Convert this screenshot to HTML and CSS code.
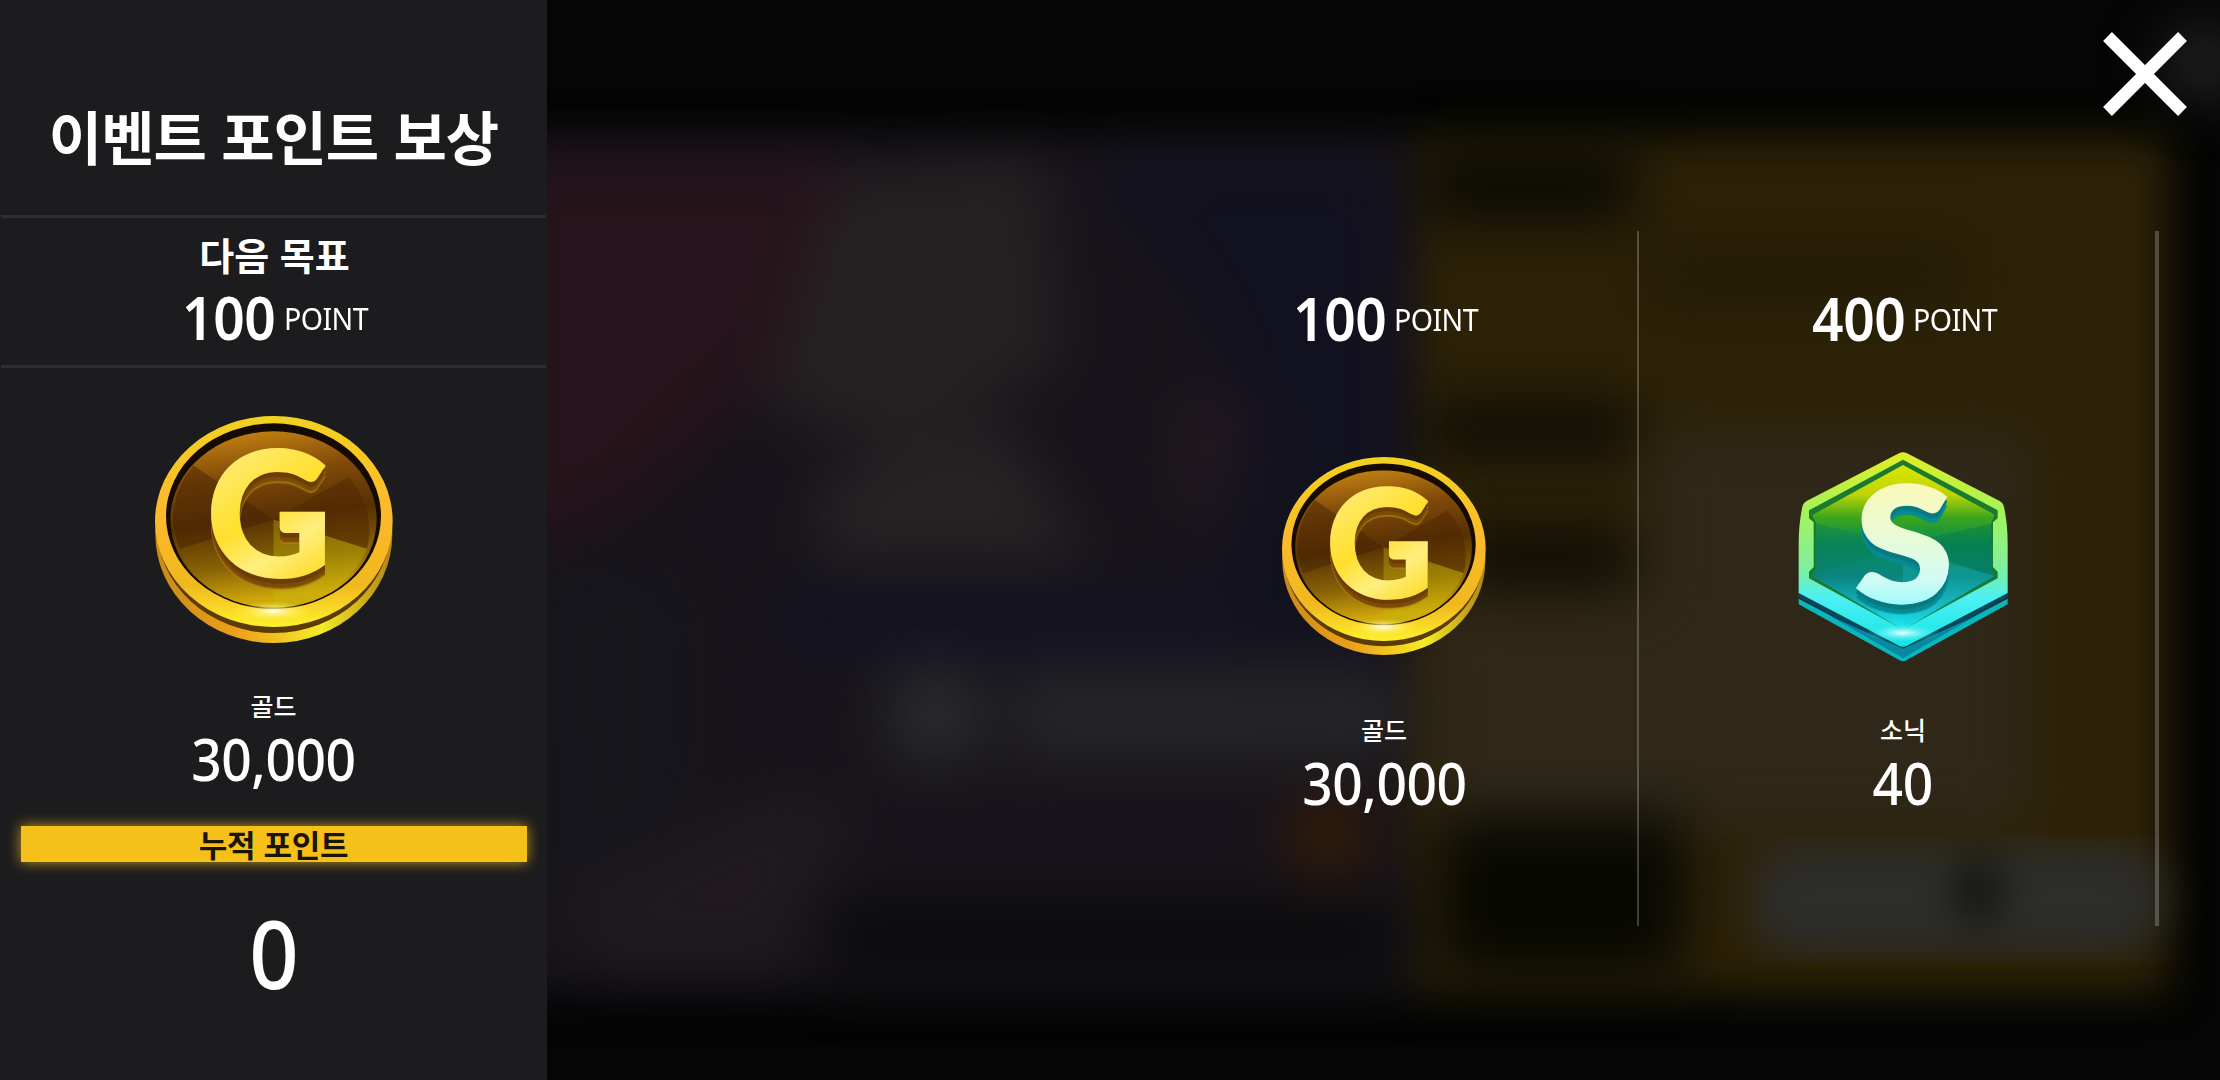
FILE: index.html
```
<!DOCTYPE html>
<html lang="ko">

<head>
    <meta charset="UTF-8">
    <title>이벤트 포인트 보상</title>
    <link rel="stylesheet" href="styles.css">
</head>

<body>

    <!-- blurred lobby behind the popup -->
    <svg class="backdrop" viewBox="0 0 2220 1080" preserveAspectRatio="none" aria-hidden="true">
        <defs>
            <filter id="soft" x="-10%" y="-10%" width="120%" height="120%" color-interpolation-filters="sRGB">
                <feGaussianBlur stdDeviation="28" />
            </filter>
            <filter id="edge" x="-10%" y="-10%" width="120%" height="120%" color-interpolation-filters="sRGB">
                <feGaussianBlur stdDeviation="20" />
            </filter>
        </defs>
        <rect width="2220" height="1080" fill="#040504" />
        <g filter="url(#edge)">
            <rect x="400" y="138" width="1010" height="855" fill="#18141b" />
            <rect x="1412" y="138" width="756" height="855" fill="#2c2207" />
        </g>
        <g filter="url(#soft)">
            <path d="M500 160H850L760 380L640 500L500 560Z" fill="#26131b" />
            <path d="M830 180L1040 160L1060 360L900 450L760 400Z" fill="#252122" />
            <path d="M1090 160H1395V500H1290L1200 300Z" fill="#12111f" />
            <path d="M820 480L1000 420L1090 560H820Z" fill="#272224" />
            <path d="M1170 400L1240 390L1260 520H1180Z" fill="#221820" />
            <rect x="780" y="590" width="600" height="60" fill="#131322" />
            <rect x="1230" y="460" width="160" height="190" fill="#12121e" />
            <rect x="890" y="670" width="90" height="90" fill="#2a2b2d" />
            <rect x="1010" y="670" width="390" height="90" fill="#252528" />
            <path d="M540 580H680V800L560 900Z" fill="#17171d" />
            <path d="M560 900L760 800H860L780 960H600Z" fill="#201a20" />
            <rect x="830" y="900" width="570" height="80" fill="#0b0b0d" />
            <ellipse cx="1328" cy="835" rx="40" ry="40" fill="#351c05" />
            <rect x="1425" y="150" width="210" height="70" fill="#0a0904" />
            <rect x="1640" y="240" width="330" height="70" fill="#251c07" />
            <rect x="1430" y="404" width="205" height="50" fill="#0a0904" />
            <rect x="1460" y="530" width="170" height="54" fill="#0a0904" />
            <path d="M1650 430H2030V830H1430V600H1650Z" fill="#2f2819" />
            <rect x="1440" y="815" width="245" height="160" fill="#080803" />
            <ellipse cx="2205" cy="62" rx="44" ry="36" fill="#242424" />
        </g>
        <g filter="url(#edge)">
            <rect x="1750" y="846" width="415" height="106" rx="50" fill="#2d2d2c" />
            <ellipse cx="1978" cy="892" rx="24" ry="32" fill="#121211" />
        </g>
    </svg>

    <!-- shared icons -->
    <svg class="sprite" aria-hidden="true">
        <defs>
            <linearGradient id="rim" x1="0" y1="0" x2="0" y2="1">
                <stop offset="0" stop-color="#f2d21f" />
                <stop offset=".45" stop-color="#fcb92c" />
                <stop offset=".8" stop-color="#f0b81e" />
                <stop offset="1" stop-color="#fff12e" />
            </linearGradient>
            <linearGradient id="base" x1="0" y1="0" x2="1" y2="0">
                <stop offset="0" stop-color="#c98a17" />
                <stop offset=".35" stop-color="#eda11c" />
                <stop offset=".7" stop-color="#f5ec27" />
                <stop offset="1" stop-color="#b38413" />
            </linearGradient>
            <linearGradient id="face" x1="0" y1="0" x2=".15" y2="1">
                <stop offset="0" stop-color="#d08c12" />
                <stop offset=".3" stop-color="#80490a" />
                <stop offset=".55" stop-color="#573003" />
                <stop offset=".8" stop-color="#8a6306" />
                <stop offset="1" stop-color="#d0a80c" />
            </linearGradient>
            <linearGradient id="gold" x1="0" y1="0" x2=".4" y2="1">
                <stop offset=".1" stop-color="#fff59c" />
                <stop offset=".4" stop-color="#ffe654" />
                <stop offset=".6" stop-color="#ffdf2c" />
                <stop offset=".8" stop-color="#ffee80" />
                <stop offset="1" stop-color="#ffdd2c" />
            </linearGradient>
            <radialGradient id="shine">
                <stop offset="0" stop-color="#fffde0" />
                <stop offset="1" stop-color="#fff12e" stop-opacity="0" />
            </radialGradient>
            <radialGradient id="glint">
                <stop offset="0" stop-color="#f0ffff" />
                <stop offset="1" stop-color="#3df0f4" stop-opacity="0" />
            </radialGradient>
            <linearGradient id="hexRim" x1="0" y1="0" x2="0" y2="1">
                <stop offset="0" stop-color="#e2ee22" />
                <stop offset=".3" stop-color="#a5f35a" />
                <stop offset=".6" stop-color="#7df0a0" />
                <stop offset=".75" stop-color="#4cf0f4" />
                <stop offset="1" stop-color="#12e4e4" />
            </linearGradient>
            <linearGradient id="hexFace" x1="0" y1="0" x2="0" y2="1">
                <stop offset="0" stop-color="#dce600" />
                <stop offset=".18" stop-color="#bdd405" />
                <stop offset=".32" stop-color="#3ba61c" />
                <stop offset=".48" stop-color="#078a55" />
                <stop offset=".68" stop-color="#0a8580" />
                <stop offset=".85" stop-color="#14b4c6" />
                <stop offset="1" stop-color="#1ff0f4" />
            </linearGradient>
            <linearGradient id="mint" x1="0" y1="0" x2="0" y2="1">
                <stop offset=".2" stop-color="#fbf8b8" />
                <stop offset=".5" stop-color="#e6fbd8" />
                <stop offset=".7" stop-color="#d3fbf4" />
                <stop offset=".85" stop-color="#9bfbff" />
            </linearGradient>
        </defs>

        <symbol id="coin" viewBox="75 77 713 680" preserveAspectRatio="none" overflow="visible">
            <ellipse cx="431" cy="432" rx="355" ry="325" fill="url(#base)" />
            <ellipse cx="431" cy="405" rx="351" ry="322" fill="#5b3b06" />
            <ellipse cx="431" cy="393" rx="356" ry="316" fill="url(#rim)" />
            <ellipse cx="430" cy="377" rx="322" ry="278" fill="#150b03" />
            <ellipse cx="430" cy="387" rx="309" ry="264" fill="url(#face)" />
            <path d="M430 387L190 225A309 264 0 0 0 150 475Z" fill="#462402" opacity=".5" />
            <path d="M430 387L655 260A309 264 0 0 1 710 475Z" fill="#502802" opacity=".55" />
            <path d="M430 387L710 475A309 264 0 0 1 430 651Z" fill="#c5b908" opacity=".35" />
            <ellipse cx="430" cy="662" rx="120" ry="30" fill="url(#shine)" />
            <text class="coin-letter" x="417" y="560" fill="url(#gold)" stroke="url(#gold)">G</text>
        </symbol>

        <symbol id="sonic" viewBox="85 65 630 630" preserveAspectRatio="none" overflow="visible">
            <path d="M87 505L400 670L714 505V522L410 690Q400 696 390 690L87 522Z" fill="#0ab6bd" />
            <path d="M87 470L400 640L714 470V500L400 682L87 500Z" fill="#06475a" />
            <path d="M180 556L400 682L620 556L400 655Z" fill="#0889a2" />
            <path d="M388 69Q400 63 412 69L690 212Q701 218 703 230Q714 280 714 340V488L412 646Q400 652 388 646L87 488V340Q87 280 98 230Q100 218 111 212Z" fill="url(#hexRim)" />
            <path d="M400 88L670 232L684 240V264L670 276V410L684 424V444L410 592Q400 598 390 592L118 444V424L132 410V276L118 264V240Z" fill="#1b7a30" />
            <path d="M400 104L662 246L674 254L664 280V412L676 436L400 598L126 436L140 412V280L128 254Z" fill="url(#hexFace)" />
            <path d="M400 340L140 280V412L126 436Z" fill="#087a5c" opacity=".35" />
            <path d="M400 340L664 280V412L676 440Z" fill="#04704c" opacity=".35" />
            <path d="M400 360L676 436L400 590Z" fill="#20c8d0" opacity=".25" />
            <ellipse cx="400" cy="608" rx="110" ry="26" fill="url(#glint)" />
            <text class="sonic-letter" transform="translate(403 514) scale(1.12 1)" fill="url(#mint)" stroke="url(#mint)">S</text>
        </symbol>
    </svg>

    <aside class="sidebar">
        <h1 class="title">이벤트 포인트 보상</h1>
        <div class="goal">
            <div class="goal-label">다음 목표</div>
            <div class="points"><span class="num">100</span><span class="unit">POINT</span></div>
        </div>
        <svg class="goal-icon"><use href="#coin" /></svg>
        <div class="item-name">골드</div>
        <div class="item-count">30,000</div>
        <div class="total-label">누적 포인트</div>
        <div class="total">0</div>
    </aside>

    <main class="rewards">
        <section class="reward">
            <div class="points"><span class="num">100</span><span class="unit">POINT</span></div>
            <div class="reward-icon"><svg class="coin"><use href="#coin" /></svg></div>
            <div class="item-name">골드</div>
            <div class="item-count">30,000</div>
        </section>
        <section class="reward last">
            <div class="points"><span class="num">400</span><span class="unit">POINT</span></div>
            <div class="reward-icon"><svg class="sonic"><use href="#sonic" /></svg></div>
            <div class="item-name">소닉</div>
            <div class="item-count">40</div>
        </section>
    </main>

    <button class="close" aria-label="닫기">
        <svg viewBox="0 0 84 84"><path d="M4.5 4.5L79.5 79.5M79.5 4.5L4.5 79.5" /></svg>
    </button>

</body>

</html>
```
FILE: styles.css
```
* {
    box-sizing: border-box;
}

body {
    margin: 0;
    display: flex;
    height: 1080px;
    overflow: hidden;
    position: relative;
    background: #040504;
    color: #fff;
    font-family: "Noto Sans CJK KR", sans-serif;
    font-weight: 500;
}

.backdrop {
    position: absolute;
    top: 0;
    left: 0;
    width: 100%;
    height: 100%;
}

.sprite {
    position: absolute;
    width: 0;
    height: 0;
}

.sidebar {
    position: relative;
    width: 547px;
    height: 100%;
    display: flex;
    flex-direction: column;
    align-items: center;
    background: #1c1c1e;
}

.title {
    margin: 0;
    width: 545px;
    height: 218px;
    padding-top: 56px;
    border-bottom: 3px solid #2e2e30;
    font-size: 58px;
    font-weight: 700;
    letter-spacing: -1px;
    line-height: 158px;
    text-align: center;
    white-space: nowrap;
}

.goal {
    width: 545px;
    height: 150px;
    padding-top: 6px;
    border-bottom: 3px solid #2e2e30;
    text-align: center;
}

.goal-label {
    font-size: 38px;
    font-weight: 700;
    line-height: 60px;
    margin-bottom: 1px;
    text-indent: 2px;
}

.points {
    display: flex;
    justify-content: center;
    align-items: center;
    gap: 8px;
    height: 60px;
}

/* numbers use the latin face, slightly condensed */
.num,
.unit,
.item-count,
.total {
    font-family: "Noto Sans", "Open Sans", sans-serif;
    transform: scaleX(0.92);
}

.num {
    margin-left: -6px;
    padding-top: 3px;
    font-size: 60px;
    font-weight: 600;
    letter-spacing: -0.5px;
    line-height: 60px;
    transform-origin: right;
}

.unit {
    margin-right: -8px;
    padding-top: 5px;
    font-size: 31px;
    font-weight: 400;
    letter-spacing: -0.6px;
    line-height: 60px;
    transform-origin: left;
}

.goal-icon {
    width: 238px;
    height: 227px;
    margin-top: 48px;
    margin-bottom: 42px;
}

.item-name {
    font-size: 25px;
    line-height: 40px;
}

.item-count {
    padding-top: 4px;
    font-size: 58px;
    letter-spacing: -0.5px;
    line-height: 60px;
}

.total-label {
    width: 506px;
    height: 36px;
    margin-top: 37px;
    background: #f5c01a;
    box-shadow: 0 0 14px rgba(245, 192, 26, 0.75);
    color: #1a1405;
    font-size: 31px;
    font-weight: 700;
    letter-spacing: -0.3px;
    line-height: 35px;
    text-align: center;
}

.total {
    margin-top: 41px;
    font-size: 94px;
    line-height: 100px;
}

.rewards {
    position: relative;
    flex: 1;
    display: flex;
    justify-content: flex-end;
    height: 695px;
    margin: 231px 61px 0 0;
}

.reward {
    width: 520px;
    display: flex;
    flex-direction: column;
    align-items: center;
    padding: 55px 0 0 12px;
    border-right: 2px solid rgba(255, 255, 255, 0.22);
}

.reward.last {
    border-right-width: 4px;
}

.reward-icon {
    display: flex;
    justify-content: center;
    align-items: center;
    height: 210px;
    margin-top: 106px;
    margin-bottom: 47px;
}

.coin {
    width: 204px;
    height: 198px;
    margin-bottom: 3px;
}

.sonic {
    width: 210px;
    height: 210px;
}

.coin-letter,
.sonic-letter {
    font-family: Lato, sans-serif;
    font-weight: 900;
    text-anchor: middle;
    stroke-width: 6px;
}

/* stacked shadows give the letters their thickness */
.coin-letter {
    font-size: 520px;
    filter: drop-shadow(0 14px 0 #6b3d05) drop-shadow(0 14px 0 #7c4b08) drop-shadow(0 4px 0 #b48a12);
}

.sonic-letter {
    font-size: 476px;
    stroke-width: 10px;
    filter: drop-shadow(0 14px 0 #067a80) drop-shadow(0 14px 0 #078a94);
}

.close {
    position: absolute;
    top: 32px;
    right: 33px;
    width: 84px;
    height: 84px;
    padding: 0;
    border: none;
    background: none;
    cursor: pointer;
}

.close svg {
    display: block;
    width: 84px;
    height: 84px;
}

.close path {
    stroke: #fff;
    stroke-width: 12.5;
    fill: none;
}
```
